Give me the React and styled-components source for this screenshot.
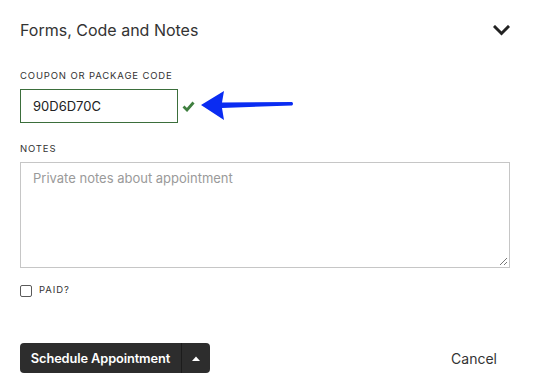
import React from "react";
import styled, { createGlobalStyle } from "styled-components";

const Global = createGlobalStyle`
  html, body { margin: 0; padding: 0; background: #fff; }
  body { font-family: Inter, "Liberation Sans", Arial, sans-serif; color: #2b2b2b; }
  * { box-sizing: border-box; }
`;

const Page = styled.div`
  width: 535px;
  height: 392px;
  padding: 20px 25px 0 20px;
  display: flex;
  flex-direction: column;
`;

const Header = styled.div`
  display: flex;
  align-items: center;
  justify-content: space-between;
  height: 20px;
`;

const Title = styled.h2`
  margin: 0;
  font-size: 16px;
  font-weight: 400;
  line-height: 20px;
  color: #333;
`;

const Label = styled.label`
  display: block;
  margin-top: ${(p) => p.$mt}px;
  font-size: 9.5px;
  line-height: 12px;
  letter-spacing: 0.85px;
  text-transform: uppercase;
  color: #333;
`;

const CodeRow = styled.div`
  display: flex;
  align-items: center;
  margin-top: 7px;
`;

const CodeInput = styled.div`
  width: 158px;
  height: 34px;
  border: 1px solid #3b6e3b;
  display: flex;
  align-items: center;
  padding-left: 12px;
  font-size: 13px;
  color: #222;
`;

const Check = styled.svg`
  margin-left: 4px;
`;

const Arrow = styled.svg`
  margin-left: 4px;
`;

const TextArea = styled.div`
  position: relative;
  margin-top: 7px;
  height: 106px;
  border: 1px solid #c6c6c6;
  padding: 7px 12px;
  font-size: 13px;
  line-height: 16px;
  color: #9a9a9a;
`;

const Grip = styled.svg`
  position: absolute;
  right: 1px;
  bottom: 1px;
`;

const CheckRow = styled.div`
  display: flex;
  align-items: center;
  gap: 7px;
  margin-top: 17px;
`;

const Box = styled.span`
  width: 12px;
  height: 12px;
  border: 1px solid #5a5a5a;
  border-radius: 2px;
`;

const SmallText = styled.span`
  font-size: 9.5px;
  letter-spacing: 0.9px;
  color: #333;
  margin-top: -4px;
`;

const Footer = styled.div`
  display: flex;
  align-items: center;
  justify-content: space-between;
  margin-top: 46px;
  padding-right: 13px;
`;

const SplitButton = styled.div`
  display: flex;
  height: 30px;
  background: #2d2d2d;
  border-radius: 4px;
  overflow: hidden;
`;

const MainBtn = styled.button`
  width: 162px;
  border: 0;
  background: transparent;
  color: #fff;
  font-family: inherit;
  font-size: 12.8px;
  font-weight: 600;
  letter-spacing: -0.1px;
  padding: 0;
  border-right: 1px solid #1c1c1c;
  white-space: nowrap;
`;

const CaretBtn = styled.button`
  width: 28px;
  border: 0;
  background: transparent;
  display: flex;
  align-items: center;
  justify-content: center;
  padding: 0;
`;

const Cancel = styled.button`
  border: 0;
  background: transparent;
  font-family: inherit;
  font-size: 14px;
  color: #333;
  padding: 0;
`;

export default function App() {
  return (
    <>
      <Global />
      <Page>
        <Header>
          <Title>Forms, Code and Notes</Title>
          <svg width="17" height="11" viewBox="0 0 17 11">
            <path d="M2 2 L8.5 8.5 L15 2" fill="none" stroke="#222" strokeWidth="3" strokeLinecap="square" />
          </svg>
        </Header>

        <Label $mt={30}>Coupon or Package Code</Label>
        <CodeRow>
          <CodeInput>90D6D70C</CodeInput>
          <Check width="13" height="11" viewBox="0 0 13 11">
            <path d="M1.5 5.5 L5 9 L11.5 1.5" fill="none" stroke="#3f7f3f" strokeWidth="2.8" />
          </Check>
          <Arrow width="100" height="32" viewBox="0 0 100 32">
            <path d="M2 15 L25 1 L23 12.5 L93 12 Q95 13.5 93 15.5 L23 18 L25 30 Z" fill="#0a2cf2" />
          </Arrow>
        </CodeRow>

        <Label $mt={20}>Notes</Label>
        <TextArea>
          Private notes about appointment
          <Grip width="9" height="9" viewBox="0 0 9 9">
            <path d="M8 1 L1 8 M8 5 L5 8" stroke="#777" strokeWidth="1" />
          </Grip>
        </TextArea>

        <CheckRow>
          <Box />
          <SmallText>PAID?</SmallText>
        </CheckRow>

        <Footer>
          <SplitButton>
            <MainBtn>Schedule Appointment</MainBtn>
            <CaretBtn>
              <svg width="8" height="5" viewBox="0 0 8 5">
                <path d="M0 5 L4 0.5 L8 5 Z" fill="#fff" />
              </svg>
            </CaretBtn>
          </SplitButton>
          <Cancel>Cancel</Cancel>
        </Footer>
      </Page>
    </>
  );
}
